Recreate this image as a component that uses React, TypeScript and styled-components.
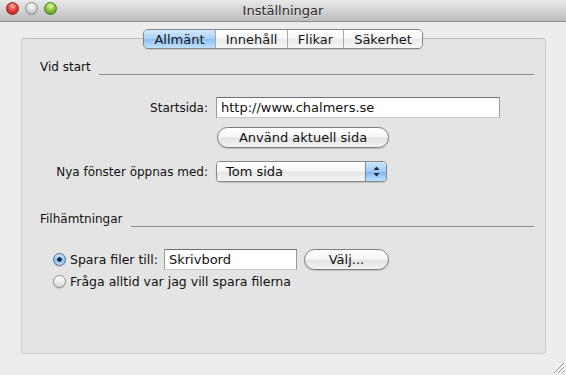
import React from 'react'
import styled, {createGlobalStyle, css} from 'styled-components'

const GlobalStyle = createGlobalStyle`
  html, body {
    margin: 0;
    padding: 0;
    background: #ededed;
  }
  body {
    font-family: "DejaVu Sans", "Liberation Sans", sans-serif;
    font-size: 12px;
    color: #111;
  }
`

const tabs = ['Allmänt', 'Innehåll', 'Flikar', 'Säkerhet']
const tabWidths = [71, 71, 55, 78]

export default function App() {
    return (
        <>
            <GlobalStyle/>
            <Window>
                <TitleBar>
                    <Lights>
                        <Light color={'red'}/>
                        <Light color={'gray'}/>
                        <Light color={'green'}/>
                    </Lights>
                    <Title>Inställningar</Title>
                </TitleBar>
                <Body>
                    <Tabs>
                        {tabs.map((t, i) => (
                            <Tab key={t} active={i === 0} width={tabWidths[i]}>{t}</Tab>
                        ))}
                    </Tabs>
                    <Panel>
                        <SectionHead>
                            <span>Vid start</span>
                            <Rule/>
                        </SectionHead>
                        <FormGrid>
                            <Label>Startsida:</Label>
                            <TextField width={284}>http://www.chalmers.se</TextField>
                            <span/>
                            <PillButton width={172}>Använd aktuell sida</PillButton>
                            <Label>Nya fönster öppnas med:</Label>
                            <Select>
                                <SelectText>Tom sida</SelectText>
                                <SelectArrows>
                                    <svg width="7" height="11" viewBox="0 0 7 11">
                                        <path d="M3.5 0.5 L6.5 4 L0.5 4 Z" fill="#1c2a44"/>
                                        <path d="M3.5 10.5 L6.5 7 L0.5 7 Z" fill="#1c2a44"/>
                                    </svg>
                                </SelectArrows>
                            </Select>
                        </FormGrid>

                        <SectionHead spaced>
                            <span>Filhämtningar</span>
                            <Rule/>
                        </SectionHead>
                        <Radios>
                            <RadioRow>
                                <Radio checked/>
                                <RadioLabel>Spara filer till:</RadioLabel>
                                <TextField width={133}>Skrivbord</TextField>
                                <ChooseButton width={85}>Välj...</ChooseButton>
                            </RadioRow>
                            <RadioRow>
                                <Radio/>
                                <RadioLabel>Fråga alltid var jag vill spara filerna</RadioLabel>
                            </RadioRow>
                        </Radios>
                    </Panel>
                    <Grip>
                        <svg width="14" height="14" viewBox="0 0 14 14">
                            <path d="M13 3 L3 13 M13 7 L7 13 M13 11 L11 13" stroke="#9a9a9a" strokeWidth="1"/>
                            <path d="M14 4 L4 14 M14 8 L8 14" stroke="#ffffff" strokeWidth="1"/>
                        </svg>
                    </Grip>
                </Body>
            </Window>
        </>
    )
}

const Window = styled.div`
  height: 100vh;
  display: flex;
  flex-direction: column;
  background: #ededed;
`

const TitleBar = styled.div`
  position: relative;
  height: 21px;
  border-bottom: 1px solid #8e8e8e;
  background: linear-gradient(#e9e9e9, #d3d3d3 50%, #bcbcbc);
  display: flex;
  align-items: center;
  justify-content: center;
`

const Lights = styled.div`
  position: absolute;
  left: 6px;
  top: 2px;
  display: flex;
  gap: 6px;
`

const lightColors = {
    red: css`
      background: radial-gradient(circle at 50% 30%, #ffb3ae 0%, #e5443c 45%, #a8160f 100%);
      border: 1px solid #8e2a24;
    `,
    gray: css`
      background: radial-gradient(circle at 50% 30%, #ffffff 0%, #d7d7d7 50%, #a9a9a9 100%);
      border: 1px solid #8f8f8f;
    `,
    green: css`
      background: radial-gradient(circle at 50% 30%, #e2ffb8 0%, #8cc63c 45%, #4f8a16 100%);
      border: 1px solid #4d7a22;
    `,
}

const Light = styled.div<{ color: 'red' | 'gray' | 'green' }>`
  width: 11px;
  height: 11px;
  border-radius: 50%;
  ${({color}) => lightColors[color]};
`

const Title = styled.div`
  font-size: 13px;
  color: #2a2a2a;
  text-shadow: 0 1px 0 rgba(255, 255, 255, 0.5);
`

const Body = styled.div`
  position: relative;
  flex: 1;
  display: flex;
  flex-direction: column;
  padding: 7px 20px 21px 21px;
`

const Tabs = styled.div`
  position: relative;
  z-index: 1;
  align-self: flex-start;
  margin-left: 122px;
  display: flex;
  height: 18px;
  border: 1px solid #858585;
  border-radius: 5px;
  overflow: hidden;
  box-shadow: 0 1px 1px rgba(0, 0, 0, 0.12);
`

const Tab = styled.div<{ active?: boolean, width: number }>`
  width: ${({width}) => width}px;
  display: flex;
  align-items: center;
  justify-content: center;
  font-size: 13px;
  color: #151515;
  border-left: 1px solid #a8a8a8;
  background: ${({active}) => active
          ? 'linear-gradient(#d4e9fc, #a9d1f7 50%, #8dc1f1 52%, #c2e2fd)'
          : 'linear-gradient(#ffffff, #f6f6f6 50%, #eaeaea 52%, #f7f7f7)'};

  &:first-child {
    border-left: none;
  }
`

const Panel = styled.div`
  flex: 1;
  margin-top: -11px;
  padding: 21px 11px 0 18px;
  background: #e4e4e4;
  border: 1px solid #cbcbcb;
  border-top-color: #bdbdbd;
  border-radius: 4px;
`

const SectionHead = styled.div<{ spaced?: boolean }>`
  display: flex;
  line-height: 15px;
  margin-top: ${({spaced}) => spaced ? 30 : 0}px;
`

const Rule = styled.div`
  flex: 1;
  margin-left: 8px;
  border-bottom: 1px solid #8a8a8a;
`

const FormGrid = styled.div`
  margin-top: 22px;
  display: grid;
  grid-template-columns: 168px auto;
  column-gap: 8px;
  align-items: center;
  justify-items: start;

  & > :nth-child(4) {
    margin: 9px 0 0 1px;
  }

  & > :nth-child(5), & > :nth-child(6) {
    margin-top: 13px;
  }
`

const Label = styled.div`
  justify-self: end;
`

const TextField = styled.div<{ width: number }>`
  box-sizing: border-box;
  width: ${({width}) => width}px;
  height: 21px;
  padding: 0 4px;
  display: flex;
  align-items: center;
  font-size: 13px;
  background: #ffffff;
  border: 1px solid #9a9a9a;
  border-top-color: #6f6f6f;
  border-bottom-color: #c8c8c8;
`

const PillButton = styled.div<{ width: number }>`
  box-sizing: border-box;
  width: ${({width}) => width}px;
  height: 21px;
  display: flex;
  align-items: center;
  justify-content: center;
  font-size: 13px;
  border: 1px solid #7d7d7d;
  border-radius: 11px;
  background: linear-gradient(#ffffff, #f7f7f7 45%, #e4e4e4 55%, #f4f4f4);
  box-shadow: 0 1px 1px rgba(0, 0, 0, 0.15);
`

const ChooseButton = styled(PillButton)`
  margin-left: 3px;
`

const Select = styled.div`
  box-sizing: border-box;
  width: 171px;
  height: 21px;
  display: flex;
  border: 1px solid #878787;
  border-radius: 4px;
  overflow: hidden;
  box-shadow: 0 1px 1px rgba(0, 0, 0, 0.15);
`

const SelectText = styled.div`
  flex: 1;
  display: flex;
  align-items: center;
  padding-left: 9px;
  font-size: 13px;
  background: linear-gradient(#ffffff, #f7f7f7 45%, #e6e6e6 55%, #f5f5f5);
`

const SelectArrows = styled.div`
  width: 20px;
  display: flex;
  align-items: center;
  justify-content: center;
  border-left: 1px solid #6d8fb8;
  background: linear-gradient(#cfe5fb, #9fcaf4 50%, #7fb7ef 52%, #bfe0fd);
`

const Radios = styled.div`
  margin-top: 22px;
  display: flex;
  flex-direction: column;
  gap: 4px;
  padding-left: 13px;
`

const RadioRow = styled.div`
  display: flex;
  align-items: center;
  gap: 4px;
`

const RadioLabel = styled.span`
  font-size: 12.5px;
  margin-right: 2px;
`

const Radio = styled.div<{ checked?: boolean }>`
  box-sizing: border-box;
  width: 13px;
  height: 13px;
  border-radius: 50%;
  border: 1px solid ${({checked}) => checked ? '#4f6d94' : '#8d8d8d'};
  background: ${({checked}) => checked
          ? 'radial-gradient(circle, #1a2433 0 2px, transparent 2.5px), linear-gradient(#cfe5fb, #8cc0f2 55%, #b9dcfd)'
          : 'linear-gradient(#ffffff, #ececec 55%, #d6d6d6)'};
  box-shadow: 0 1px 1px rgba(0, 0, 0, 0.15);
`

const Grip = styled.div`
  position: absolute;
  right: 1px;
  bottom: 1px;
  width: 14px;
  height: 14px;
`
